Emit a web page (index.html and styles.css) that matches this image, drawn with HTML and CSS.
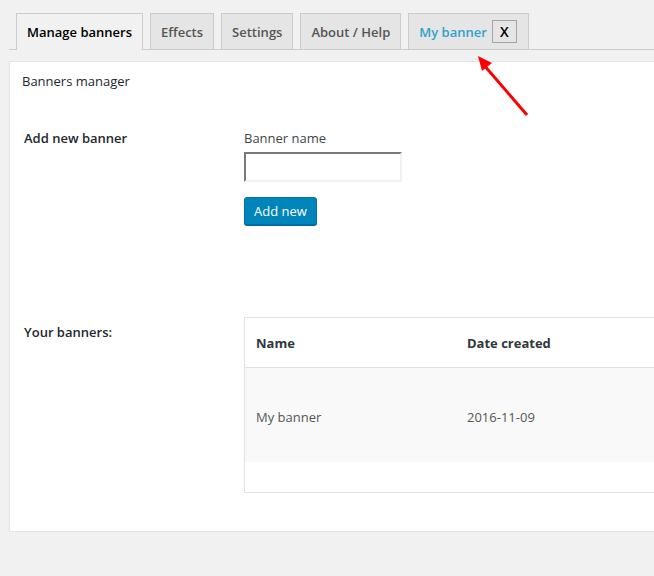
FILE: index.html
```html
<!DOCTYPE html>
<html lang="en">
<head>
<meta charset="utf-8">
<title>Banners manager</title>
<link rel="stylesheet" href="styles.css">
</head>
<body>
<div class="wrap">
  <nav class="tabs">
    <a class="tab tab-active">Manage banners</a>
    <a class="tab">Effects</a>
    <a class="tab">Settings</a>
    <a class="tab">About / Help</a>
    <a class="tab tab-banner"><span class="tab-banner-name">My banner</span><span class="tab-close">X</span></a>
  </nav>

  <section class="panel">
    <h2 class="panel-title">Banners manager</h2>

    <div class="form-row">
      <div class="row-label">Add new banner</div>
      <div class="row-field">
        <label class="field-label">Banner name</label>
        <input class="text-input" type="text">
        <button class="btn-primary" type="button">Add new</button>
      </div>
    </div>

    <div class="form-row form-row-list">
      <div class="row-label row-label-list">Your banners:</div>
      <div class="row-field">
        <table class="banners">
          <thead>
            <tr><th class="col-name">Name</th><th>Date created</th></tr>
          </thead>
          <tbody>
            <tr class="row-data"><td class="col-name">My banner</td><td>2016-11-09</td></tr>
            <tr class="row-empty"><td></td><td></td></tr>
          </tbody>
        </table>
      </div>
    </div>
  </section>

  <svg class="arrow" width="80" height="80" viewBox="0 0 80 80" aria-hidden="true">
    <line x1="57" y1="59" x2="13" y2="8" stroke="#f00" stroke-width="3" stroke-linecap="butt"/>
    <polygon points="8,0 22,7 12,15" fill="#f00"/>
  </svg>
</div>
</body>
</html>
```

FILE: styles.css
```css
html, body {
  margin: 0;
  padding: 0;
  overflow: hidden;
}

body {
  background: #f1f1f1;
  font-family: "Open Sans", "Noto Sans", sans-serif;
  font-size: 13px;
  color: #23282d;
}

.wrap {
  position: relative;
  width: 900px;
  padding-left: 9px;
}

.tabs {
  display: flex;
  align-items: flex-end;
  padding-top: 13px;
  border-bottom: 1px solid #ccc;
  height: 36px;
}

.tab {
  display: flex;
  align-items: center;
  margin-left: 7px;
  padding: 5px 10px;
  height: 25px;
  border: 1px solid #ccc;
  border-bottom: none;
  background: #e5e5e5;
  color: #555;
  font-size: 13px;
  line-height: 24px;
  font-weight: 600;
  white-space: nowrap;
}

.tab-active {
  background: #f1f1f1;
  color: #000;
  height: 26px;
  margin-bottom: -1px;
}

.tab-banner {
  padding-right: 11px;
}

.tab-banner-name {
  color: #2ea2cc;
}

.tab-close {
  display: flex;
  align-items: center;
  justify-content: center;
  width: 23px;
  height: 21px;
  margin-left: 5px;
  border: 1px solid #a3a3a3;
  color: #000;
  font-weight: 600;
  font-size: 14px;
}

.panel {
  margin-top: 11px;
  width: 760px;
  background: #fff;
  border: 1px solid #e5e5e5;
  box-shadow: 0 1px 1px rgba(0, 0, 0, 0.06);
  padding-bottom: 38px;
}

.panel-title {
  margin: 0;
  padding: 9px 12px 10px;
  font-size: 13px;
  line-height: 20px;
  font-weight: 400;
  color: #23282d;
}

.form-row {
  display: grid;
  grid-template-columns: 220px 1fr;
  padding-left: 14px;
  margin-top: 27px;
}

.form-row-list {
  margin-top: 92px;
}

.row-label {
  font-size: 13px;
  line-height: 20px;
  font-weight: 600;
  color: #23282d;
}

.row-label-list {
  padding-top: 5px;
}

.row-field {
  display: flex;
  flex-direction: column;
  align-items: flex-start;
}

.field-label {
  font-size: 13px;
  line-height: 20px;
  color: #444;
}

.text-input {
  box-sizing: border-box;
  width: 158px;
  height: 30px;
  margin: 4px 0 0;
  padding: 3px 5px;
  border: 2px solid #f1f1f1;
  border-top-color: #7a7a7a;
  border-left-color: #7a7a7a;
  background: #fff;
  font: inherit;
}

.btn-primary {
  box-sizing: border-box;
  margin-top: 15px;
  height: 28px;
  padding: 0 9px 1px;
  border: 1px solid #0073aa;
  border-radius: 3px;
  background: #0085ba;
  box-shadow: 0 1px 0 #006799;
  color: #fff;
  font-family: inherit;
  font-size: 13px;
  line-height: 26px;
  white-space: nowrap;
}

.banners {
  width: 500px;
  border-collapse: collapse;
  border: 1px solid #e1e1e1;
  text-align: left;
}

.banners th {
  height: 49px;
  padding: 0 11px;
  border-bottom: 1px solid #e1e1e1;
  font-size: 13px;
  font-weight: 700;
  color: #32373c;
  vertical-align: middle;
}

.banners td {
  padding: 0 11px;
  font-size: 13px;
  color: #555;
}

.col-name {
  width: 189px;
}

.row-data td {
  height: 91px;
  padding-top: 3px;
  background: #f9f9f9;
}

.row-empty td {
  height: 30px;
}

.arrow {
  position: absolute;
  left: 470px;
  top: 56px;
}
```
